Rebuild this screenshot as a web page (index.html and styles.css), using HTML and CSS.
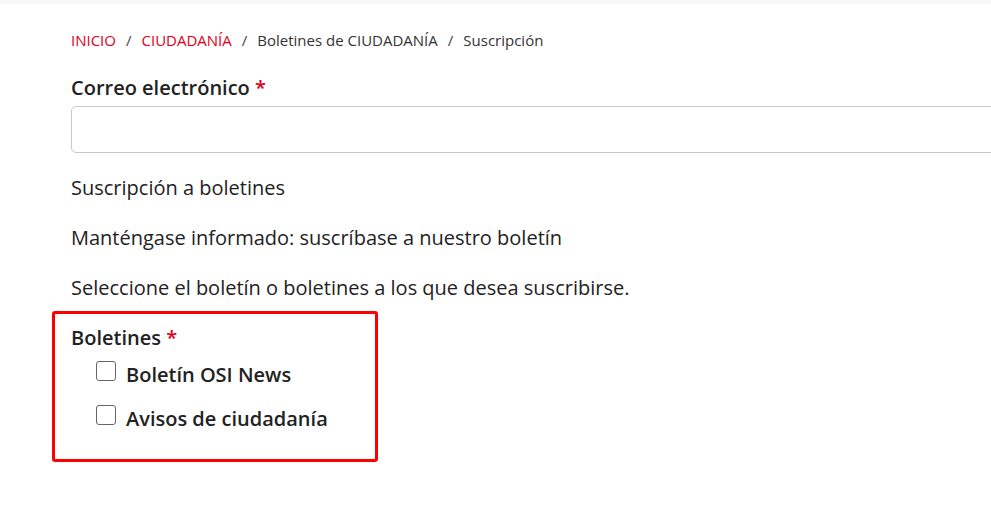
FILE: index.html
```html
<!DOCTYPE html>
<html lang="es">
<head>
<meta charset="utf-8">
<title>Suscripción</title>
<link rel="stylesheet" href="styles.css">
</head>
<body>
<div class="topbar"></div>
<main class="content">
  <nav class="breadcrumb">
    <a href="#" class="crumb-link">INICIO</a>
    <span class="sep">/</span>
    <a href="#" class="crumb-link">CIUDADANÍA</a>
    <span class="sep">/</span>
    <span class="crumb">Boletines de CIUDADANÍA</span>
    <span class="sep">/</span>
    <span class="crumb">Suscripción</span>
  </nav>
  <form class="form">
    <label class="label" for="email">Correo electrónico <span class="req">*</span></label>
    <input class="input" id="email" type="email">
    <p class="text">Suscripción a boletines</p>
    <p class="text">Manténgase informado: suscríbase a nuestro boletín</p>
    <p class="text">Seleccione el boletín o boletines a los que desea suscribirse.</p>
    <div class="highlight">
      <div class="label">Boletines <span class="req">*</span></div>
      <div class="options">
        <label class="option"><span class="box"></span>Boletín OSI News</label>
        <label class="option"><span class="box"></span>Avisos de ciudadanía</label>
      </div>
    </div>
  </form>
</main>
</body>
</html>
```

FILE: styles.css
```css
html, body {
  margin: 0;
  padding: 0;
  background: #fff;
  overflow: hidden;
}
body {
  font-family: "Open Sans", "Noto Sans", sans-serif;
  color: #222;
  width: 991px;
}
.topbar {
  height: 4px;
  background: #f7f7f7;
}
.content {
  padding-left: 71px;
}
.breadcrumb {
  margin-top: 26px;
  font-size: 15px;
  line-height: 20px;
  display: flex;
  gap: 10px;
  color: #333;
}
.crumb-link {
  color: #e2001a;
  text-decoration: none;
}
.sep { color: #444; }
.form {
  display: flex;
  flex-direction: column;
  align-items: flex-start;
}
.label {
  font-size: 20px;
  font-weight: 600;
  line-height: 26px;
  color: #222;
}
.form > .label {
  margin-top: 25px;
}
.req { color: #e2001a; }
.input {
  box-sizing: border-box;
  margin-top: 5px;
  width: 940px;
  height: 47px;
  border: 1px solid #c8c8c8;
  border-radius: 5px;
  background: #fff;
}
.text {
  margin: 0;
  font-size: 20px;
  line-height: 26px;
}
.form > .text:first-of-type { margin-top: 22px; }
.text + .text { margin-top: 24px; }
.highlight {
  box-sizing: border-box;
  margin-left: -19px;
  margin-top: 10px;
  width: 326px;
  height: 151px;
  border: 3px solid #f00;
  border-radius: 3px;
  padding: 11px 16px 0 16px;
}
.options {
  display: flex;
  flex-direction: column;
  gap: 18px;
  margin-top: 11px;
  padding-left: 25px;
}
.option {
  display: flex;
  align-items: center;
  gap: 10px;
  font-size: 20px;
  font-weight: 600;
  line-height: 26px;
}
.box {
  box-sizing: border-box;
  width: 20px;
  height: 20px;
  border: 1.5px solid #666;
  border-radius: 3px;
  margin-top: -8px;
}
```
